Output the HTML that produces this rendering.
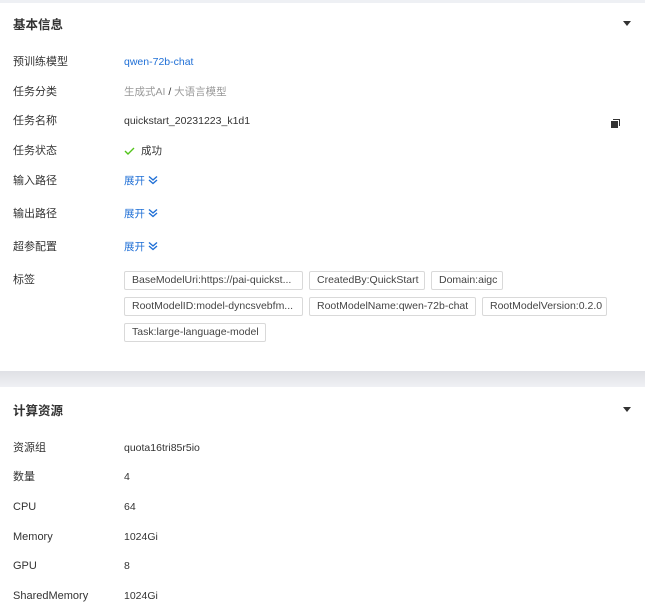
<!DOCTYPE html>
<html><head><meta charset="utf-8"><style>
*{margin:0;padding:0;box-sizing:border-box}
body{width:645px;height:615px;overflow:hidden;background:#fff;font-family:"Liberation Sans","Noto Sans CJK SC",sans-serif;font-size:10.5px;color:#333;position:relative}
.abs{position:absolute;white-space:nowrap;line-height:14px}
.title{font-size:12.5px;font-weight:bold;color:#333}
.lab{left:13px;color:#333;font-size:11px}
.val{left:124px}
.blue{color:#1f6fd6}
.grey{color:#999}
.tag{position:absolute;height:19px;border:1px solid #d9d9d9;border-radius:2px;padding:0 7px;line-height:17px;font-size:10.5px;color:#444;white-space:nowrap}
.tri{position:absolute;width:0;height:0;border-left:4px solid transparent;border-right:4px solid transparent;border-top:5px solid #333}
</style></head><body>
<div style="position:absolute;left:0;top:0;width:645px;height:3px;background:#eef0f4"></div>
<div style="position:absolute;left:0;top:371px;width:645px;height:16px;background:linear-gradient(#dfe0e5,#eff0f4)"></div>

<div class="abs title" style="left:13px;top:18px">基本信息</div>
<div class="tri" style="left:623px;top:21px"></div>

<div class="abs lab" style="top:55px">预训练模型</div><div class="abs val blue" style="top:55px">qwen-72b-chat</div>
<div class="abs lab" style="top:85px">任务分类</div><div class="abs val grey" style="top:85px">生成式AI <span style="color:#333">/</span> 大语言模型</div>
<div class="abs lab" style="top:114px">任务名称</div><div class="abs val" style="top:114px">quickstart_20231223_k1d1</div>
<svg style="position:absolute;left:610px;top:118px" width="11" height="11" viewBox="0 0 11 11"><path d="M3 1.5H9.5V8" fill="none" stroke="#333" stroke-width="1"/><rect x="1" y="3" width="7" height="7" fill="#333"/></svg>
<div class="abs lab" style="top:144px">任务状态</div>
<svg style="position:absolute;left:124px;top:146px" width="11" height="10" viewBox="0 0 11 10"><path d="M1 5L4 8L10 2" fill="none" stroke="#52c41a" stroke-width="1.4"/></svg>
<div class="abs" style="left:141px;top:144px">成功</div>

<div class="abs lab" style="top:174px">输入路径</div><div class="abs val blue" style="top:174px">展开 <svg width="10" height="10" viewBox="0 0 10 10" style="vertical-align:-1px"><path d="M1 1.5L5 5L9 1.5M1 5L5 8.5L9 5" fill="none" stroke="#1f6fd6" stroke-width="1.4"/></svg></div>
<div class="abs lab" style="top:207px">输出路径</div><div class="abs val blue" style="top:207px">展开 <svg width="10" height="10" viewBox="0 0 10 10" style="vertical-align:-1px"><path d="M1 1.5L5 5L9 1.5M1 5L5 8.5L9 5" fill="none" stroke="#1f6fd6" stroke-width="1.4"/></svg></div>
<div class="abs lab" style="top:240px">超参配置</div><div class="abs val blue" style="top:240px">展开 <svg width="10" height="10" viewBox="0 0 10 10" style="vertical-align:-1px"><path d="M1 1.5L5 5L9 1.5M1 5L5 8.5L9 5" fill="none" stroke="#1f6fd6" stroke-width="1.4"/></svg></div>
<div class="abs lab" style="top:273px">标签</div>

<div class="tag" style="left:124px;top:271px;width:179px">BaseModelUri:https://pai-quickst...</div>
<div class="tag" style="left:309px;top:271px;width:116px">CreatedBy:QuickStart</div>
<div class="tag" style="left:431px;top:271px;width:72px">Domain:aigc</div>
<div class="tag" style="left:124px;top:297px;width:179px">RootModelID:model-dyncsvebfm...</div>
<div class="tag" style="left:309px;top:297px;width:167px">RootModelName:qwen-72b-chat</div>
<div class="tag" style="left:482px;top:297px;width:125px">RootModelVersion:0.2.0</div>
<div class="tag" style="left:124px;top:323px;width:142px">Task:large-language-model</div>

<div class="abs title" style="left:13px;top:404px">计算资源</div>
<div class="tri" style="left:623px;top:407px"></div>

<div class="abs lab" style="top:441px">资源组</div><div class="abs val" style="top:441px">quota16tri85r5io</div>
<div class="abs lab" style="top:470px">数量</div><div class="abs val" style="top:470px">4</div>
<div class="abs lab" style="top:500px">CPU</div><div class="abs val" style="top:500px">64</div>
<div class="abs lab" style="top:530px">Memory</div><div class="abs val" style="top:530px">1024Gi</div>
<div class="abs lab" style="top:559px">GPU</div><div class="abs val" style="top:559px">8</div>
<div class="abs lab" style="top:589px">SharedMemory</div><div class="abs val" style="top:589px">1024Gi</div>
</body></html>
